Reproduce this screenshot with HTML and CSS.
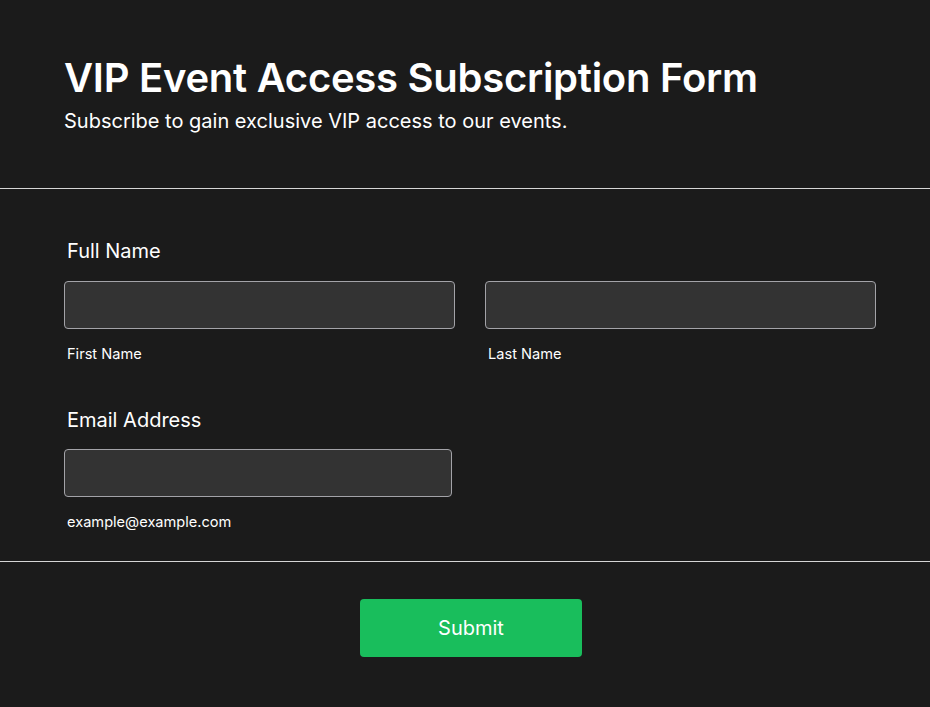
FILE: index.html
```html
<!DOCTYPE html>
<html lang="en">
<head>
<meta charset="utf-8">
<title>VIP Event Access Subscription Form</title>
<link rel="stylesheet" href="styles.css">
</head>
<body>
<form class="form">
  <header class="header">
    <h1 class="title">VIP Event Access Subscription Form</h1>
    <p class="subtitle">Subscribe to gain exclusive VIP access to our events.</p>
  </header>
  <section class="fields">
    <div class="field field-name">
      <label class="label">Full Name</label>
      <div class="row">
        <div class="col">
          <input class="input" type="text">
          <span class="sublabel">First Name</span>
        </div>
        <div class="col">
          <input class="input" type="text">
          <span class="sublabel">Last Name</span>
        </div>
      </div>
    </div>
    <div class="field field-email">
      <label class="label">Email Address</label>
      <div class="col col-email">
        <input class="input" type="email">
        <span class="sublabel">example@example.com</span>
      </div>
    </div>
  </section>
  <footer class="footer">
    <button class="submit" type="button">Submit</button>
  </footer>
</form>
</body>
</html>
```
FILE: styles.css
```css
html, body {
  margin: 0;
  padding: 0;
  background: #1b1b1b;
  color: #ffffff;
  font-family: Inter, "Noto Sans", "Liberation Sans", sans-serif;
}
.form {
  display: flex;
  flex-direction: column;
}
.header {
  padding: 53px 54px 55px 64px;
  border-bottom: 1px solid #d6d6d6;
}
.title {
  margin: 0;
  font-size: 40px;
  font-weight: 600;
  line-height: 50px;
  letter-spacing: -0.27px;
}
.subtitle {
  margin: 6px 0 0;
  font-size: 20px;
  font-weight: 400;
  line-height: 24px;
}
.fields {
  padding: 50px 54px 30px 64px;
  border-bottom: 1px solid #d6d6d6;
  display: flex;
  flex-direction: column;
  gap: 45px;
}
.field {
  display: flex;
  flex-direction: column;
}
.label {
  display: block;
  padding-left: 3px;
  font-size: 20px;
  font-weight: 400;
  line-height: 24px;
}
.field-name .label { margin-bottom: 18px; }
.field-email .label { margin-bottom: 17px; }
.row {
  display: grid;
  grid-template-columns: 391px 391px;
  gap: 30px;
}
.col {
  display: flex;
  flex-direction: column;
}
.col-email { width: 388px; }
.input {
  box-sizing: border-box;
  height: 48px;
  width: 100%;
  margin: 0;
  background: #333333;
  border: 1px solid #a3a3a8;
  border-radius: 4px;
  color: #fff;
  font: inherit;
}
.sublabel {
  margin-top: 16px;
  padding-left: 3px;
  font-size: 14.6px;
  line-height: 18px;
}
.field-email .sublabel { margin-top: 16px; }
.footer {
  padding: 37px 53px 50px 65px;
  display: flex;
  justify-content: center;
}
.submit {
  width: 222px;
  height: 58px;
  background: #19be5c;
  border: none;
  border-radius: 4px;
  color: #fff;
  font-family: inherit;
  font-size: 20px;
  font-weight: 400;
  padding: 0;
}
```
